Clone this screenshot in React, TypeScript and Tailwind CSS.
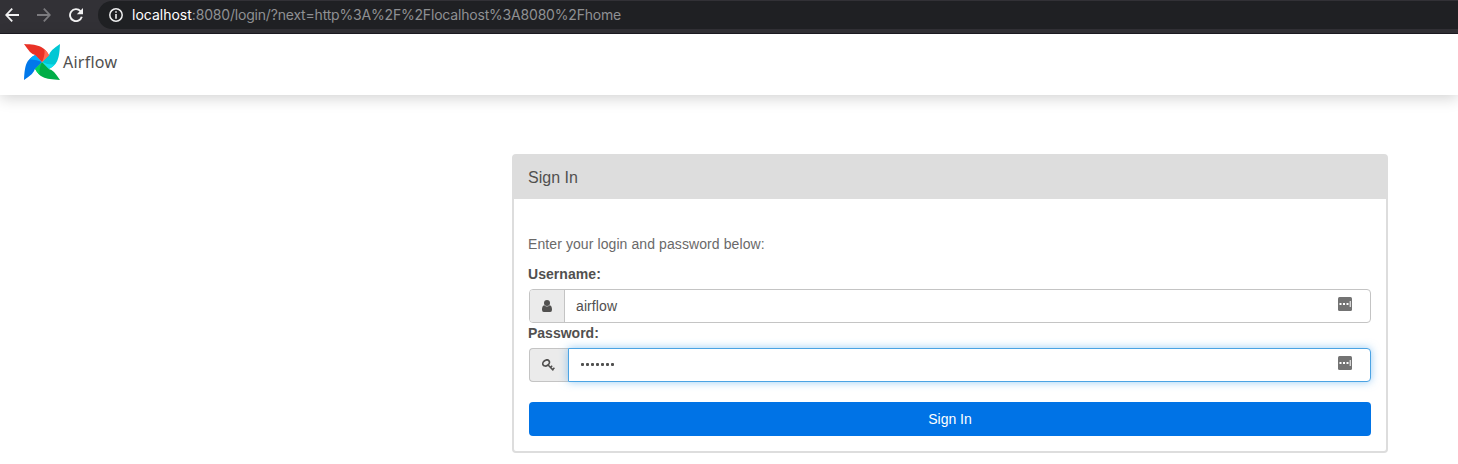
import React from "react";

const blades = [
  { angle: 90, base: "#00c7d4", fold: "#11e1ee" },
  { angle: 180, base: "#00ad46", fold: "#04d659" },
  { angle: 270, base: "#0178ea", fold: "#00adff" },
  { angle: 0, base: "#e93226", fold: "#ff6a52" },
];

function Pinwheel() {
  return (
    <svg className="h-9 w-9 shrink-0" viewBox="0 0 36 36">
      {blades.map(({ angle, base, fold }) => (
        <g key={angle} transform={`rotate(${angle} 18 18)`}>
          <path d="M0 0C8 .4 13 .9 17.200 2.900Q22 5.300 25 11.200L18 18L11.200 11Q8.500 10.300 6 7.900Q3.400 5 0 0Z" fill={base} />
          <path d="M20.500 5.200Q23.200 7.500 25 11.200L18 18Q21 12 20.500 5.200Z" fill={fold} />
        </g>
      ))}
    </svg>
  );
}

function BrowserBar() {
  return (
    <div className="flex h-[34px] items-start border-b border-[#1d1b22] bg-[#323136] pt-px">
      <div className="flex h-7 w-[98px] shrink-0 items-center gap-[18px] pl-[5px]">
        <svg className="h-[14px] w-[14px]" viewBox="0 0 14 14" fill="none" stroke="#f1f1f2" strokeWidth="1.8">
          <path d="M14 7H1.500M7.200 .6L1.200 7L7.200 13.400" />
        </svg>
        <svg className="h-[14px] w-[14px]" viewBox="0 0 14 14" fill="none" stroke="#7b7a7e" strokeWidth="1.8">
          <path d="M0 7H12.500M6.800 .6L12.800 7L6.800 13.400" />
        </svg>
        <svg className="h-[14px] w-[14px]" viewBox="0 0 14 14">
          <path d="M11.500 3.100A6 6 0 1 0 12.800 8.800" fill="none" stroke="#f1f1f2" strokeWidth="1.900" />
          <path d="M14 0V6.200H7.800Z" fill="#f1f1f2" />
        </svg>
      </div>
      <div className="flex h-7 min-w-0 flex-1 items-center rounded-l-full bg-[#1f2023] pl-[11px]">
        <svg className="h-[14px] w-[14px] shrink-0" viewBox="0 0 14 14">
          <circle cx="7" cy="7" r="6.200" fill="none" stroke="#eeeeef" strokeWidth="1.500" />
          <path d="M6.200 3.300h1.600v1.500H6.200zM6.200 6h1.600v4.700H6.200z" fill="#eeeeef" />
        </svg>
        <span className="ml-[9px] whitespace-nowrap font-['Inter',sans-serif] text-[14px] leading-7 tracking-[-0.19px] text-[#8f9093]">
          <span className="tracking-normal text-white">localhost</span>:8080/login/?next=http%3A%2F%2Flocalhost%3A8080%2Fhome
        </span>
      </div>
    </div>
  );
}

function UserIcon() {
  return (
    <svg className="h-3 w-[10px]" viewBox="0 0 10 12" fill="#51504f">
      <circle cx="5" cy="3" r="3" />
      <path d="M2.300 5.200Q5 8 7.700 5.200C9.500 5.500 10 7.500 10 9.800Q10 12 8.200 12H1.800Q0 12 0 9.800C0 7.500 .5 5.500 2.300 5.200Z" />
    </svg>
  );
}

function KeyIcon() {
  return (
    <svg className="mr-[2px] h-[13px] w-[13px]" viewBox="0 0 13 13" fill="none" stroke="#51504f">
      <ellipse cx="4.100" cy="4" rx="3.600" ry="2.700" transform="rotate(-35 4.100 4)" strokeWidth="1.700" />
      <path d="M5.800 5.800L11.400 11.400M8 8.900L10.200 6.700M10.100 11.100L12.400 8.800" strokeWidth="1.500" />
    </svg>
  );
}

function CredentialIcon() {
  return (
    <svg className="h-[14px] w-[14px]" viewBox="0 0 14 14">
      <rect width="14" height="14" rx="1.500" fill="#737373" />
      <path d="M1.500 6h2v2h-2zM5 6h2v2H5zM8.500 6h2v2h-2zM11.700 4h1v6h-1z" fill="#fff" />
    </svg>
  );
}

export default function App() {
  return (
    <div className="h-[464px] overflow-hidden bg-white font-['Liberation_Sans',Arial,sans-serif] text-[14px] text-[#51504f]">
      <BrowserBar />
      <header className="flex h-[61px] items-start bg-white pt-[10px] pl-6 shadow-[0_3px_14px_rgba(0,0,0,0.18)]">
        <Pinwheel />
        <span className="ml-[3px] font-['Noto_Sans',sans-serif] text-[16px] leading-9 tracking-[0.25px]">Airflow</span>
      </header>
      <main className="pt-[59px] pl-[512px]">
        <section className="h-[299px] w-[876px] rounded-[4px] border-2 border-[#ddd]">
          <h1 className="h-[43px] bg-[#ddd] pl-[14px] text-[16px] leading-[43px]">Sign In</h1>
          <form className="px-[15px] pt-[35px]" onSubmit={(event) => event.preventDefault()}>
            <p className="-ml-px h-[30px] leading-5 tracking-[0.09px] text-[#6a6969]">Enter your login and password below:</p>
            <label htmlFor="username" className="-ml-px block h-[25px] font-bold leading-5 tracking-[0.06px]">Username:</label>
            <div className="flex h-[34px] overflow-hidden rounded-[4px] border border-[#c4c4c4] bg-white">
              <div className="flex w-[35px] items-center justify-center border-r border-[#c4c4c4] bg-[#ebebeb]"><UserIcon /></div>
              <input id="username" defaultValue="airflow" className="min-w-0 flex-1 pl-[11px] tracking-[0.1px] outline-none" />
              <div className="pt-[7px] pr-[18px]"><CredentialIcon /></div>
            </div>
            <label htmlFor="password" className="-ml-px block h-[25px] font-bold leading-5">Password:</label>
            <div className="flex h-[34px]">
              <div className="flex w-[39px] items-center justify-center rounded-l-[4px] border border-r-0 border-[#c4c4c4] bg-[#ebebeb]"><KeyIcon /></div>
              <div className="flex flex-1 rounded-r-[4px] border border-[#4ba3e3] bg-white shadow-[0_0_8px_rgba(82,168,236,0.6)]">
                <div className="flex flex-1 items-center gap-[2px] pl-3">
                  {Array.from({ length: 7 }, (_, i) => <span key={i} className="mb-px h-[3px] w-[3px] rounded-[1px] bg-[#51504f]" />)}
                </div>
                <div className="pt-[7px] pr-[18px]"><CredentialIcon /></div>
              </div>
            </div>
            <button className="mt-5 block h-[34px] w-full rounded-[4px] bg-[#0073e6] leading-[34px] text-white">Sign In</button>
          </form>
        </section>
      </main>
    </div>
  );
}
